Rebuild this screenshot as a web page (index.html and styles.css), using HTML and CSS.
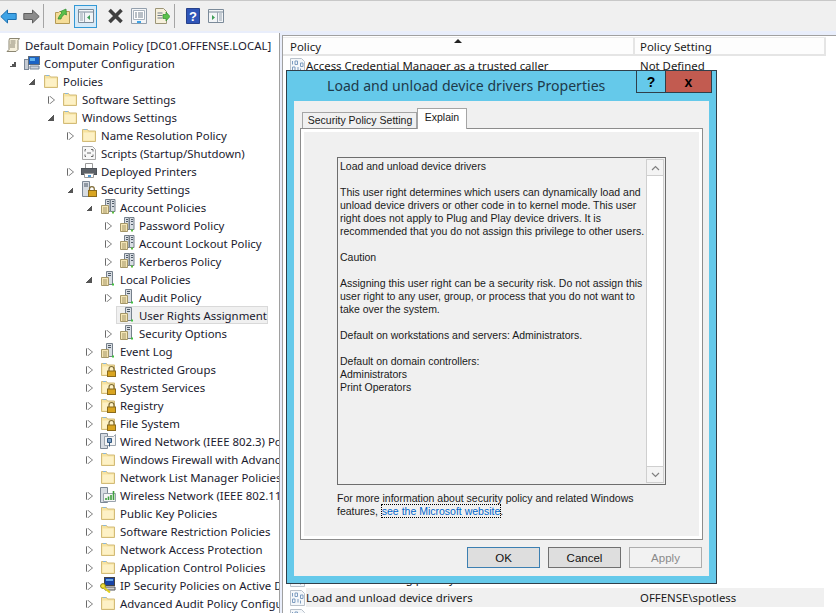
FILE: index.html
```html
<!DOCTYPE html>
<html lang="en">
<head>
<meta charset="utf-8">
<title>Group Policy Management Editor</title>
<link rel="stylesheet" href="styles.css">
</head>
<body>
<svg class="defs" width="0" height="0" aria-hidden="true">
  <defs>
    <symbol id="folder" viewBox="0 0 16 16">
      <path d="M1.500 14.500V2.500h5l1 1.500h7v10.500z" fill="#f7e3a0" stroke="#d2bb78"/>
      <path d="M2.500 13.500V5.500h11v8z" fill="#fdf1c6"/>
      <path d="M3 2.500h3" stroke="#8bb8dc"/>
    </symbol>
    <symbol id="lockfolder" viewBox="0 0 16 16">
      <path d="M1.500 14.500V2.500h5l1 1.500h7v10.500z" fill="#f7e3a0" stroke="#d2bb78"/>
      <path d="M2.500 13.500V5.500h11v8z" fill="#fdf1c6"/>
      <path d="M3 2.500h3" stroke="#8bb8dc"/>
      <path d="M9 10V8a2.500 2.500 0 0 1 5 0v2" fill="none" stroke="#7d6a35" stroke-width="1.200"/>
      <rect x="7.500" y="10" width="8" height="5.500" fill="#d9a521" stroke="#8a6a1c"/>
    </symbol>
    <symbol id="policy" viewBox="0 0 16 16">
      <path d="M4.500 1.500h10l-1.500 2v9l-2 2h-9l2-2v-9z" fill="#f6f0dc" stroke="#8b8672"/>
      <path d="M5.500 4h5M5.500 6h5M5 8h5M5 10h5" stroke="#8b8672"/>
    </symbol>
    <symbol id="computer" viewBox="0 0 16 16">
      <rect x="0.500" y="4.500" width="4" height="10" fill="#c6ccd4" stroke="#7b8796"/>
      <rect x="4.500" y="1.500" width="11" height="8" fill="#1b63c4" stroke="#5f6c7c"/>
      <path d="M6 3h5v3H6z" fill="#60b2ee"/>
      <path d="M6 11h9v3H6z" fill="#cdd3da" stroke="#7b8796"/>
    </symbol>
    <symbol id="script" viewBox="0 0 16 16">
      <path d="M1.500 1.500h10l3 3v10h-13z" fill="#f7f7f7" stroke="#a6a6a6"/>
      <path d="M5 4.500H4v2M10 4.500h2v2M5 11.500H4v-2M10 11.500h2v-2M6 8h4" fill="none" stroke="#6a6a6a"/>
    </symbol>
    <symbol id="printer" viewBox="0 0 16 16">
      <path d="M4.500 .500h7v5h-7z" fill="#fff" stroke="#9a9a9a"/>
      <rect x="0.500" y="5.500" width="15" height="6" fill="#5d6268" stroke="#4d5258"/>
      <path d="M3.500 10.500h9v4h-9z" fill="#fff" stroke="#9a9a9a"/>
      <path d="M7 12h3v2H7z" fill="#4d9ad6"/>
    </symbol>
    <symbol id="secure" viewBox="0 0 16 16">
      <path d="M1.500 .500h7v15h-7z" fill="#d7dce2" stroke="#7c8794"/>
      <path d="M3 3h4M3 5h4" stroke="#4c5866"/>
      <path d="M8.500 9.500V8a2.400 2.400 0 0 1 4.800 0v1.500" fill="none" stroke="#7d6a35" stroke-width="1.200"/>
      <rect x="7.500" y="9.500" width="8" height="6" fill="#d9a521" stroke="#8a6a1c"/>
    </symbol>
    <symbol id="server3" viewBox="0 0 16 16">
      <path d="M5.500 .500h4.500v12H5.500zM10.500 .500H15v12h-4.500z" fill="#d8dde3" stroke="#76808b"/>
      <path d="M7 2.500h2M7 4.500h2M12 2.500h2M12 4.500h2M12 7.500h2" stroke="#4f5b68"/>
      <path d="M1.500 6.500h7v8h-7z" fill="#f4e5b5" stroke="#a59768"/>
      <path d="M3 9h4M3 11h4M3 13h4" stroke="#a59768"/>
      <rect x="12" y="12.500" width="2" height="2" fill="#5cbf3f"/>
    </symbol>
    <symbol id="server1" viewBox="0 0 16 16">
      <path d="M6.500 .500h6v13h-6z" fill="#d8dde3" stroke="#76808b"/>
      <path d="M8 2.500h3M8 4.500h3" stroke="#4f5b68"/>
      <path d="M1.500 6.500h7v8h-7z" fill="#f4e5b5" stroke="#a59768"/>
      <path d="M3 9h4M3 11h4M3 13h4" stroke="#a59768"/>
      <rect x="12" y="12.500" width="2" height="2" fill="#3fbf3f"/>
    </symbol>
    <symbol id="wired" viewBox="0 0 16 16">
      <path d="M.5 .500h7v15h-7z" fill="#d7dce2" stroke="#7c8794"/>
      <path d="M4.500 3.500h9l2-2v11h-11z" fill="#f5f5f5" stroke="#9aa3ad"/>
      <path d="M7.500 5.500h4v4h-4zM9.500 9.500v4" fill="#7fa2c8" stroke="#33587f"/>
    </symbol>
    <symbol id="wireless" viewBox="0 0 16 16">
      <path d="M.5 .500h7v15h-7z" fill="#d7dce2" stroke="#7c8794"/>
      <path d="M3.500 6.500h12v8h-12z" fill="#f5f5f5" stroke="#9aa3ad"/>
      <path d="M6 13v-2M8.500 13V9.500M11 13V8M13.500 13V4" stroke="#3fa03f" stroke-width="1.600"/>
    </symbol>
    <symbol id="ipsec" viewBox="0 0 16 16">
      <rect x="4.500" y="0.500" width="10" height="8" fill="#1743a5" stroke="#444"/>
      <path d="M6 2h7v2H6z" fill="#66a4e4"/>
      <path d="M5 10h10v3H5z" fill="#cfcfcf" stroke="#555"/>
      <circle cx="3" cy="9" r="2.400" fill="#f3e23a" stroke="#8c7f10"/>
      <path d="M4 10.500l6 5" stroke="#e1cf1f" stroke-width="2"/>
    </symbol>
    <symbol id="right" viewBox="0 0 16 16">
      <path d="M.5 .500h11l3 3v12H.5z" fill="#f4f7fa" stroke="#b9c1ca"/>
      <path d="M2.500 3v3.500M5 3h2.500v3.500H5zM2.500 9h2.500v3.500H2.500zM8 9v3.500M10.500 5h2.500v3.500h-2.500zM10.500 10.500v3" fill="none" stroke="#7d9cc0"/>
    </symbol>
  </defs>
</svg>

<div class="app">
  <header class="toolbar">
    <svg class="tb-ic tb-back" viewBox="0 0 17 15"><path d="M7.500 1 .8 7.500l6.700 6.500v-3.500h8.700v-6H7.500z" fill="#3ea3e6" stroke="#1c6fae"/></svg>
    <svg class="tb-ic tb-fwd" viewBox="0 0 17 15"><path d="M9.500 1l6.700 6.500-6.700 6.500v-3.500H.8v-6h8.700z" fill="#8c8c8c" stroke="#5e5e5e"/></svg>
    <span class="tb-sep"></span>
    <svg class="tb-ic tb-up" viewBox="0 0 16 16"><path d="M.5 15.500v-11h3l1-1h10v12z" fill="#f5dd98" stroke="#b49a55"/><path d="M3 11c1-3 2.500-5 4-6L5.500 3.500 11 1l.5 6L9.500 6c-1.500 1.500-3 3-3.500 5z" fill="#5ac04b" stroke="#2f8a2c" stroke-width=".7"/></svg>
    <span class="tb-active"><svg class="tb-ic tb-pane" viewBox="0 0 16 14"><path d="M.5.500h15v13H.5z" fill="#f3f5f7" stroke="#7b8a99"/><path d="M.5 3h15" stroke="#7b8a99"/><path d="M6.500 3v10" stroke="#9aa6b2"/><path d="M2 5h3M2 7h3M2 9h3M2 11h3" stroke="#98a4b0"/><path d="M12 6v5L9 8.500z" fill="#3f9e57"/></svg></span>
    <svg class="tb-ic tb-x" viewBox="0 0 17 16"><path d="M2.500 2 14.500 14M14.500 2 2.500 14" stroke="#404040" stroke-width="3.600"/></svg>
    <svg class="tb-ic tb-prop" viewBox="0 0 16 16"><path d="M.5.500h15v15H.5z" fill="#f3f5f7" stroke="#94a0ad"/><path d="M2.500 2.500h11v9h-11z" fill="#fff" stroke="#a9b3bd"/><path d="M4 5h2M7 5h5M4 7h2M7 7h5M4 9h2M7 9h5" stroke="#73808e"/><path d="M6 14h4" stroke="#3ea3e6" stroke-width="2"/></svg>
    <svg class="tb-ic tb-exp" viewBox="0 0 16 16"><path d="M1.500.500h8l3 3v12h-11z" fill="#f6f0dc" stroke="#9c9577"/><path d="M3.500 5h5M3.500 7.500h5M3.500 10h5" stroke="#6f7b88"/><path d="M9 6.500h3V4l4 4.500-4 4.500v-2.500H9z" fill="#5ac04b" stroke="#328f2f" stroke-width=".7"/></svg>
    <span class="tb-sep tb-sep2"></span>
    <svg class="tb-ic tb-help" viewBox="0 0 14 16"><path d="M.5.500h13v15H.5z" fill="#2f55b8" stroke="#27418a"/><text x="7" y="13" class="tb-q">?</text></svg>
    <svg class="tb-ic tb-view" viewBox="0 0 16 14"><path d="M.5.500h15v13H.5z" fill="#f3f5f7" stroke="#7b8a99"/><path d="M.5 3h15" stroke="#7b8a99"/><path d="M9.500 3v10" stroke="#9aa6b2"/><path d="M11 5h3M11 7h3M11 9h3M11 11h3" stroke="#98a4b0"/><path d="M4 6v5l3-2.500z" fill="#3f9e57"/></svg>
  </header>

  <main class="panes">
    <nav class="tree">
      <div class="row l0"><svg class="ic"><use href="#policy"/></svg><span>Default Domain Policy [DC01.OFFENSE.LOCAL]</span></div>
      <div class="row l1"><i class="ex open"></i><svg class="ic"><use href="#computer"/></svg><span>Computer Configuration</span></div>
      <div class="row l2"><i class="ex open"></i><svg class="ic"><use href="#folder"/></svg><span>Policies</span></div>
      <div class="row l3"><i class="ex"></i><svg class="ic"><use href="#folder"/></svg><span>Software Settings</span></div>
      <div class="row l3"><i class="ex open"></i><svg class="ic"><use href="#folder"/></svg><span>Windows Settings</span></div>
      <div class="row l4"><i class="ex"></i><svg class="ic"><use href="#folder"/></svg><span>Name Resolution Policy</span></div>
      <div class="row l4"><i class="ex none"></i><svg class="ic"><use href="#script"/></svg><span>Scripts (Startup/Shutdown)</span></div>
      <div class="row l4"><i class="ex"></i><svg class="ic"><use href="#printer"/></svg><span>Deployed Printers</span></div>
      <div class="row l4"><i class="ex open"></i><svg class="ic"><use href="#secure"/></svg><span>Security Settings</span></div>
      <div class="row l5"><i class="ex open"></i><svg class="ic"><use href="#server3"/></svg><span>Account Policies</span></div>
      <div class="row l6"><i class="ex"></i><svg class="ic"><use href="#server3"/></svg><span>Password Policy</span></div>
      <div class="row l6"><i class="ex"></i><svg class="ic"><use href="#server3"/></svg><span>Account Lockout Policy</span></div>
      <div class="row l6"><i class="ex"></i><svg class="ic"><use href="#server3"/></svg><span>Kerberos Policy</span></div>
      <div class="row l5"><i class="ex open"></i><svg class="ic"><use href="#server1"/></svg><span>Local Policies</span></div>
      <div class="row l6"><i class="ex"></i><svg class="ic"><use href="#server1"/></svg><span>Audit Policy</span></div>
      <div class="row l6"><i class="ex none"></i><div class="selbox"><svg class="ic"><use href="#server1"/></svg><span>User Rights Assignment</span></div></div>
      <div class="row l6"><i class="ex"></i><svg class="ic"><use href="#server1"/></svg><span>Security Options</span></div>
      <div class="row l5"><i class="ex"></i><svg class="ic"><use href="#server1"/></svg><span>Event Log</span></div>
      <div class="row l5"><i class="ex"></i><svg class="ic"><use href="#lockfolder"/></svg><span>Restricted Groups</span></div>
      <div class="row l5"><i class="ex"></i><svg class="ic"><use href="#lockfolder"/></svg><span>System Services</span></div>
      <div class="row l5"><i class="ex"></i><svg class="ic"><use href="#lockfolder"/></svg><span>Registry</span></div>
      <div class="row l5"><i class="ex"></i><svg class="ic"><use href="#lockfolder"/></svg><span>File System</span></div>
      <div class="row l5"><i class="ex"></i><svg class="ic"><use href="#wired"/></svg><span>Wired Network (IEEE 802.3) Policies</span></div>
      <div class="row l5"><i class="ex"></i><svg class="ic"><use href="#folder"/></svg><span>Windows Firewall with Advanced Security</span></div>
      <div class="row l5"><i class="ex none"></i><svg class="ic"><use href="#folder"/></svg><span>Network List Manager Policies</span></div>
      <div class="row l5"><i class="ex"></i><svg class="ic"><use href="#wireless"/></svg><span>Wireless Network (IEEE 802.11) Policies</span></div>
      <div class="row l5"><i class="ex"></i><svg class="ic"><use href="#folder"/></svg><span>Public Key Policies</span></div>
      <div class="row l5"><i class="ex"></i><svg class="ic"><use href="#folder"/></svg><span>Software Restriction Policies</span></div>
      <div class="row l5"><i class="ex"></i><svg class="ic"><use href="#folder"/></svg><span>Network Access Protection</span></div>
      <div class="row l5"><i class="ex"></i><svg class="ic"><use href="#folder"/></svg><span>Application Control Policies</span></div>
      <div class="row l5"><i class="ex"></i><svg class="ic"><use href="#ipsec"/></svg><span>IP Security Policies on Active Directory</span></div>
      <div class="row l5"><i class="ex"></i><svg class="ic"><use href="#folder"/></svg><span>Advanced Audit Policy Configuration</span></div>
    </nav>

    <section class="list">
      <div class="lhead">
        <div class="c1">Policy<span class="sort"></span></div>
        <div class="c2">Policy Setting</div>
      </div>
      <div class="lrow"><svg class="ic"><use href="#right"/></svg><span class="c1t">Access Credential Manager as a trusted caller</span><span class="c2t">Not Defined</span></div>
      <div class="lrow"><svg class="ic"><use href="#right"/></svg><span class="c1t">Access this computer from the network</span><span class="c2t">Not Defined</span></div>
      <div class="lrow"><svg class="ic"><use href="#right"/></svg><span class="c1t">Act as part of the operating system</span><span class="c2t">Not Defined</span></div>
      <div class="lrow"><svg class="ic"><use href="#right"/></svg><span class="c1t">Add workstations to domain</span><span class="c2t">Not Defined</span></div>
      <div class="lrow"><svg class="ic"><use href="#right"/></svg><span class="c1t">Adjust memory quotas for a process</span><span class="c2t">Not Defined</span></div>
      <div class="lrow"><svg class="ic"><use href="#right"/></svg><span class="c1t">Allow log on locally</span><span class="c2t">Not Defined</span></div>
      <div class="lrow"><svg class="ic"><use href="#right"/></svg><span class="c1t">Allow log on through Remote Desktop Services</span><span class="c2t">Not Defined</span></div>
      <div class="lrow"><svg class="ic"><use href="#right"/></svg><span class="c1t">Back up files and directories</span><span class="c2t">Not Defined</span></div>
      <div class="lrow"><svg class="ic"><use href="#right"/></svg><span class="c1t">Bypass traverse checking</span><span class="c2t">Not Defined</span></div>
      <div class="lrow"><svg class="ic"><use href="#right"/></svg><span class="c1t">Change the system time</span><span class="c2t">Not Defined</span></div>
      <div class="lrow"><svg class="ic"><use href="#right"/></svg><span class="c1t">Change the time zone</span><span class="c2t">Not Defined</span></div>
      <div class="lrow"><svg class="ic"><use href="#right"/></svg><span class="c1t">Create a pagefile</span><span class="c2t">Not Defined</span></div>
      <div class="lrow"><svg class="ic"><use href="#right"/></svg><span class="c1t">Create a token object</span><span class="c2t">Not Defined</span></div>
      <div class="lrow"><svg class="ic"><use href="#right"/></svg><span class="c1t">Create global objects</span><span class="c2t">Not Defined</span></div>
      <div class="lrow"><svg class="ic"><use href="#right"/></svg><span class="c1t">Create permanent shared objects</span><span class="c2t">Not Defined</span></div>
      <div class="lrow"><svg class="ic"><use href="#right"/></svg><span class="c1t">Create symbolic links</span><span class="c2t">Not Defined</span></div>
      <div class="lrow"><svg class="ic"><use href="#right"/></svg><span class="c1t">Debug programs</span><span class="c2t">Not Defined</span></div>
      <div class="lrow"><svg class="ic"><use href="#right"/></svg><span class="c1t">Deny access to this computer from the network</span><span class="c2t">Not Defined</span></div>
      <div class="lrow"><svg class="ic"><use href="#right"/></svg><span class="c1t">Deny log on as a batch job</span><span class="c2t">Not Defined</span></div>
      <div class="lrow"><svg class="ic"><use href="#right"/></svg><span class="c1t">Deny log on as a service</span><span class="c2t">Not Defined</span></div>
      <div class="lrow"><svg class="ic"><use href="#right"/></svg><span class="c1t">Deny log on locally</span><span class="c2t">Not Defined</span></div>
      <div class="lrow"><svg class="ic"><use href="#right"/></svg><span class="c1t">Deny log on through Remote Desktop Services</span><span class="c2t">Not Defined</span></div>
      <div class="lrow"><svg class="ic"><use href="#right"/></svg><span class="c1t">Enable computer and user accounts to be trusted for delegation</span><span class="c2t">Not Defined</span></div>
      <div class="lrow"><svg class="ic"><use href="#right"/></svg><span class="c1t">Force shutdown from a remote system</span><span class="c2t">Not Defined</span></div>
      <div class="lrow"><svg class="ic"><use href="#right"/></svg><span class="c1t">Generate security audits</span><span class="c2t">Not Defined</span></div>
      <div class="lrow"><svg class="ic"><use href="#right"/></svg><span class="c1t">Impersonate a client after authentication</span><span class="c2t">Not Defined</span></div>
      <div class="lrow"><svg class="ic"><use href="#right"/></svg><span class="c1t">Increase a process working set</span><span class="c2t">Not Defined</span></div>
      <div class="lrow"><svg class="ic"><use href="#right"/></svg><span class="c1t">Increase scheduling priority</span><span class="c2t">Not Defined</span></div>
      <div class="lrow lsel"><svg class="ic"><use href="#right"/></svg><span class="c1t">Load and unload device drivers</span><span class="c2t">OFFENSE\spotless</span></div>
      <div class="lrow"><svg class="ic"><use href="#right"/></svg><span class="c1t">Lock pages in memory</span><span class="c2t">Not Defined</span></div>
    </section>
  </main>

  <div class="dialog" role="dialog">
    <div class="dtitle">
      <h1>Load and unload device drivers Properties</h1>
      <div class="caps"><span class="cap-help">?</span><span class="cap-close">x</span></div>
    </div>
    <div class="dclient">
      <div class="tabs">
        <span class="tab">Security Policy Setting</span>
        <span class="tab tab-on">Explain</span>
      </div>
      <div class="tabpanel">
        <div class="tabinner">
          <div class="explain">
            <div class="etext">
              <p>Load and unload device drivers</p>
              <p>This user right determines which users can dynamically load and<br>unload device drivers or other code in to kernel mode. This user<br>right does not apply to Plug and Play device drivers. It is<br>recommended that you do not assign this privilege to other users.</p>
              <p>Caution</p>
              <p>Assigning this user right can be a security risk. Do not assign this<br>user right to any user, group, or process that you do not want to<br>take over the system.</p>
              <p>Default on workstations and servers: Administrators.</p>
              <p>Default on domain controllers:<br>Administrators<br>Print Operators</p>
            </div>
            <div class="sbar">
              <span class="sbtn"><svg viewBox="0 0 9 6" class="chev"><path d="M1 5l3.500-3.500L8 5" fill="none" stroke="#808080" stroke-width="1.200"/></svg></span>
              <span class="strack"></span>
              <span class="sbtn"><svg viewBox="0 0 9 6" class="chev"><path d="M1 1l3.500 3.500L8 1" fill="none" stroke="#808080" stroke-width="1.200"/></svg></span>
            </div>
          </div>
          <p class="more">For more information about security policy and related Windows<br>features, <a href="#" class="mslink">see the Microsoft website</a>.</p>
        </div>
      </div>
      <div class="dbtns">
        <button class="btn btn-def">OK</button>
        <button class="btn">Cancel</button>
        <button class="btn btn-off">Apply</button>
      </div>
    </div>
  </div>
</div>
</body>
</html>
```
FILE: styles.css
```css
* { box-sizing: border-box; }
html, body { margin: 0; height: 100%; overflow: hidden; background: #fff; }
body { font-family: "Noto Sans", sans-serif; font-size: 11.4px; color: #1a1a1a; }
.defs { position: absolute; }
.app { position: relative; width: 836px; height: 613px; display: flex; flex-direction: column; overflow: hidden; }

.toolbar { height: 31px; flex: none; display: flex; align-items: center; background: #f0f0f0; border-top: 1px solid #c8c8c8; }
.tb-ic { display: block; flex: none; }
.tb-back { width: 17px; height: 15px; }
.tb-fwd { width: 17px; height: 15px; margin-left: 6px; }
.tb-sep { width: 1px; height: 24px; background: #a5a5a5; margin-left: 3px; }
.tb-up { width: 16px; height: 16px; margin-left: 11px; }
.tb-active { width: 23px; height: 23px; margin-left: 3px; display: flex; align-items: center; justify-content: center; border: 1px solid #3399d6; background: #d5e9f7; }
.tb-pane { width: 16px; height: 14px; }
.tb-x { width: 17px; height: 16px; margin-left: 10px; }
.tb-prop { width: 16px; height: 16px; margin-left: 7px; }
.tb-exp { width: 16px; height: 16px; margin-left: 7px; }
.tb-sep2 { margin-left: 4px; }
.tb-help { width: 14px; height: 16px; margin-left: 11px; }
.tb-q { font: bold 13px "Liberation Sans", sans-serif; fill: #fff; text-anchor: middle; }
.tb-view { width: 16px; height: 14px; margin-left: 8px; }

.panes { flex: 1; min-height: 0; display: flex; background: #e9eefb; }
.tree { width: 280px; flex: none; margin-top: 2px; padding-top: 3px; background: #fff; border-right: 1px solid #a0a0a0; overflow: hidden; }
.row { height: 18px; display: flex; align-items: center; white-space: nowrap; color: #1a1a2e; }
.l0 { padding-left: 5px; }
.l1 { padding-left: 8px; }
.l2 { padding-left: 27px; }
.l3 { padding-left: 46px; }
.l4 { padding-left: 65px; }
.l5 { padding-left: 84px; }
.l6 { padding-left: 103px; }
.ex { width: 9px; height: 18px; flex: none; margin-right: 7px; position: relative; }
.ex::after { content: ""; position: absolute; left: 3px; top: 6px; border-left: 5px solid #fff; border-top: 4px solid transparent; border-bottom: 4px solid transparent; filter: drop-shadow(-1px 0 0 #6a6a6a) drop-shadow(1px 0 0 #6a6a6a); }
.ex.open::after { left: 2px; top: 7px; border: 0; width: 6px; height: 6px; background: linear-gradient(135deg, transparent 50%, #555 50%); filter: none; }
.ex.none::after { display: none; }
.ic { width: 16px; height: 16px; flex: none; margin-right: 4px; }
.selbox { display: flex; align-items: center; width: 152px; height: 18px; margin-left: -3px; padding-left: 2px; background: #f0f0f0; border: 1px solid #d9d9d9; }

.list { flex: 1; min-width: 0; margin: 4px 0 0 2px; padding-top: 1px; background: #fff; border-top: 1px solid #a0a0a0; border-left: 1px solid #a0a0a0; overflow: hidden; }
.lhead { height: 19px; display: flex; width: 543px; border-top: 1px solid #ececec; border-bottom: 2px solid #e5e5e5; background: #fdfdfd; }
.c1 { width: 352px; flex: none; padding-left: 7px; line-height: 17px; position: relative; border-right: 2px solid #e5e5e5; }
.c2 { flex: 1; padding-left: 5px; line-height: 17px; border-right: 2px solid #e5e5e5; }
.sort { position: absolute; left: 171px; top: 1px; border-left: 4px solid transparent; border-right: 4px solid transparent; border-bottom: 4px solid #222; }
.lrow { height: 19px; width: 541px; display: flex; align-items: center; padding-left: 7px; white-space: nowrap; }
.lrow .ic { margin-right: 0; }
.c1t { width: 334px; flex: none; overflow: hidden; }
.c2t { flex: 1; }
.lsel { align-items: stretch; }
.lsel .ic { align-self: center; }
.lsel .c1t, .lsel .c2t { background: #f0f0f0; line-height: 19px; }

.dialog { position: absolute; left: 286px; top: 70px; width: 431px; height: 514px; background: #65c9ea; border: 1px solid #2f3f4a; padding: 0 7px 7px; display: flex; flex-direction: column; }
.dtitle { height: 30px; flex: none; position: relative; display: flex; align-items: center; }
.dtitle h1 { margin: -2px 0 0 33px; font: 400 14.1px "Noto Sans", sans-serif; color: #1d3a4a; white-space: nowrap; }
.caps { position: absolute; top: -1px; right: -3px; display: flex; }
.cap-help, .cap-close { height: 23px; display: flex; align-items: center; justify-content: center; border: 1px solid #2f3f4a; font: 700 14px "Liberation Sans", sans-serif; color: #000; }
.cap-help { width: 29px; border-right: 0; }
.cap-close { width: 47px; background: #c25b50; }
.dclient { flex: 1; min-height: 0; background: #f0f0f0; padding: 11px 6px 8px; display: flex; flex-direction: column; font-family: "Liberation Sans", sans-serif; font-size: 10.5px; }
.tabs { height: 16px; flex: none; display: flex; align-items: flex-end; padding-left: 2px; position: relative; z-index: 1; }
.tab { height: 16px; width: 115px; display: flex; align-items: center; justify-content: center; padding: 0 0 1px 1px; background: #f0f0f0; border: 1px solid #a5a5a5; border-bottom: 0; }
.tab-on { height: 21px; width: 50px; padding: 0 0 4px; background: #fff; margin-bottom: -1px; }
.tabpanel { height: 412px; flex: none; border: 1px solid #8c8c8c; padding: 3px; background: #fff; }
.tabinner { height: 100%; background: #f0f0f0; padding: 25px 33px 0; }
.explain { height: 328px; border: 1px solid #6d6d6d; display: flex; background: #f0f0f0; }
.etext { flex: 1; padding: 2px 0 0 2px; line-height: 13px; white-space: nowrap; }
.etext p { margin: 0 0 13px; }
.sbar { width: 18px; flex: none; margin: 1px 1px 1px 0; display: flex; flex-direction: column; background: #fff; border: 1px solid #cfcfcf; }
.sbtn { height: 16px; flex: none; display: flex; align-items: center; justify-content: center; background: #f4f4f4; }
.sbtn:first-child { border-bottom: 1px solid #cfcfcf; }
.sbtn:last-child { border-top: 1px solid #cfcfcf; }
.strack { flex: 1; background: #fff; }
.chev { width: 9px; height: 6px; }
.more { margin: 7px 0 0; line-height: 13px; white-space: nowrap; }
.mslink { color: #0066cc; text-decoration: none; outline: 1px dotted #000; margin-left: 1px; }
.dbtns { display: flex; justify-content: flex-end; gap: 8px; padding: 7px 1px 0 0; }
.btn { width: 73px; height: 21px; padding: 0; border: 1px solid #707070; background: #dedede; font: 11.5px "Liberation Sans", sans-serif; color: #111; }
.btn-def { border-color: #3c7fb1; }
.btn-off { background: #f2f2f2; border-color: #adadad; color: #8a8a8a; }
```
